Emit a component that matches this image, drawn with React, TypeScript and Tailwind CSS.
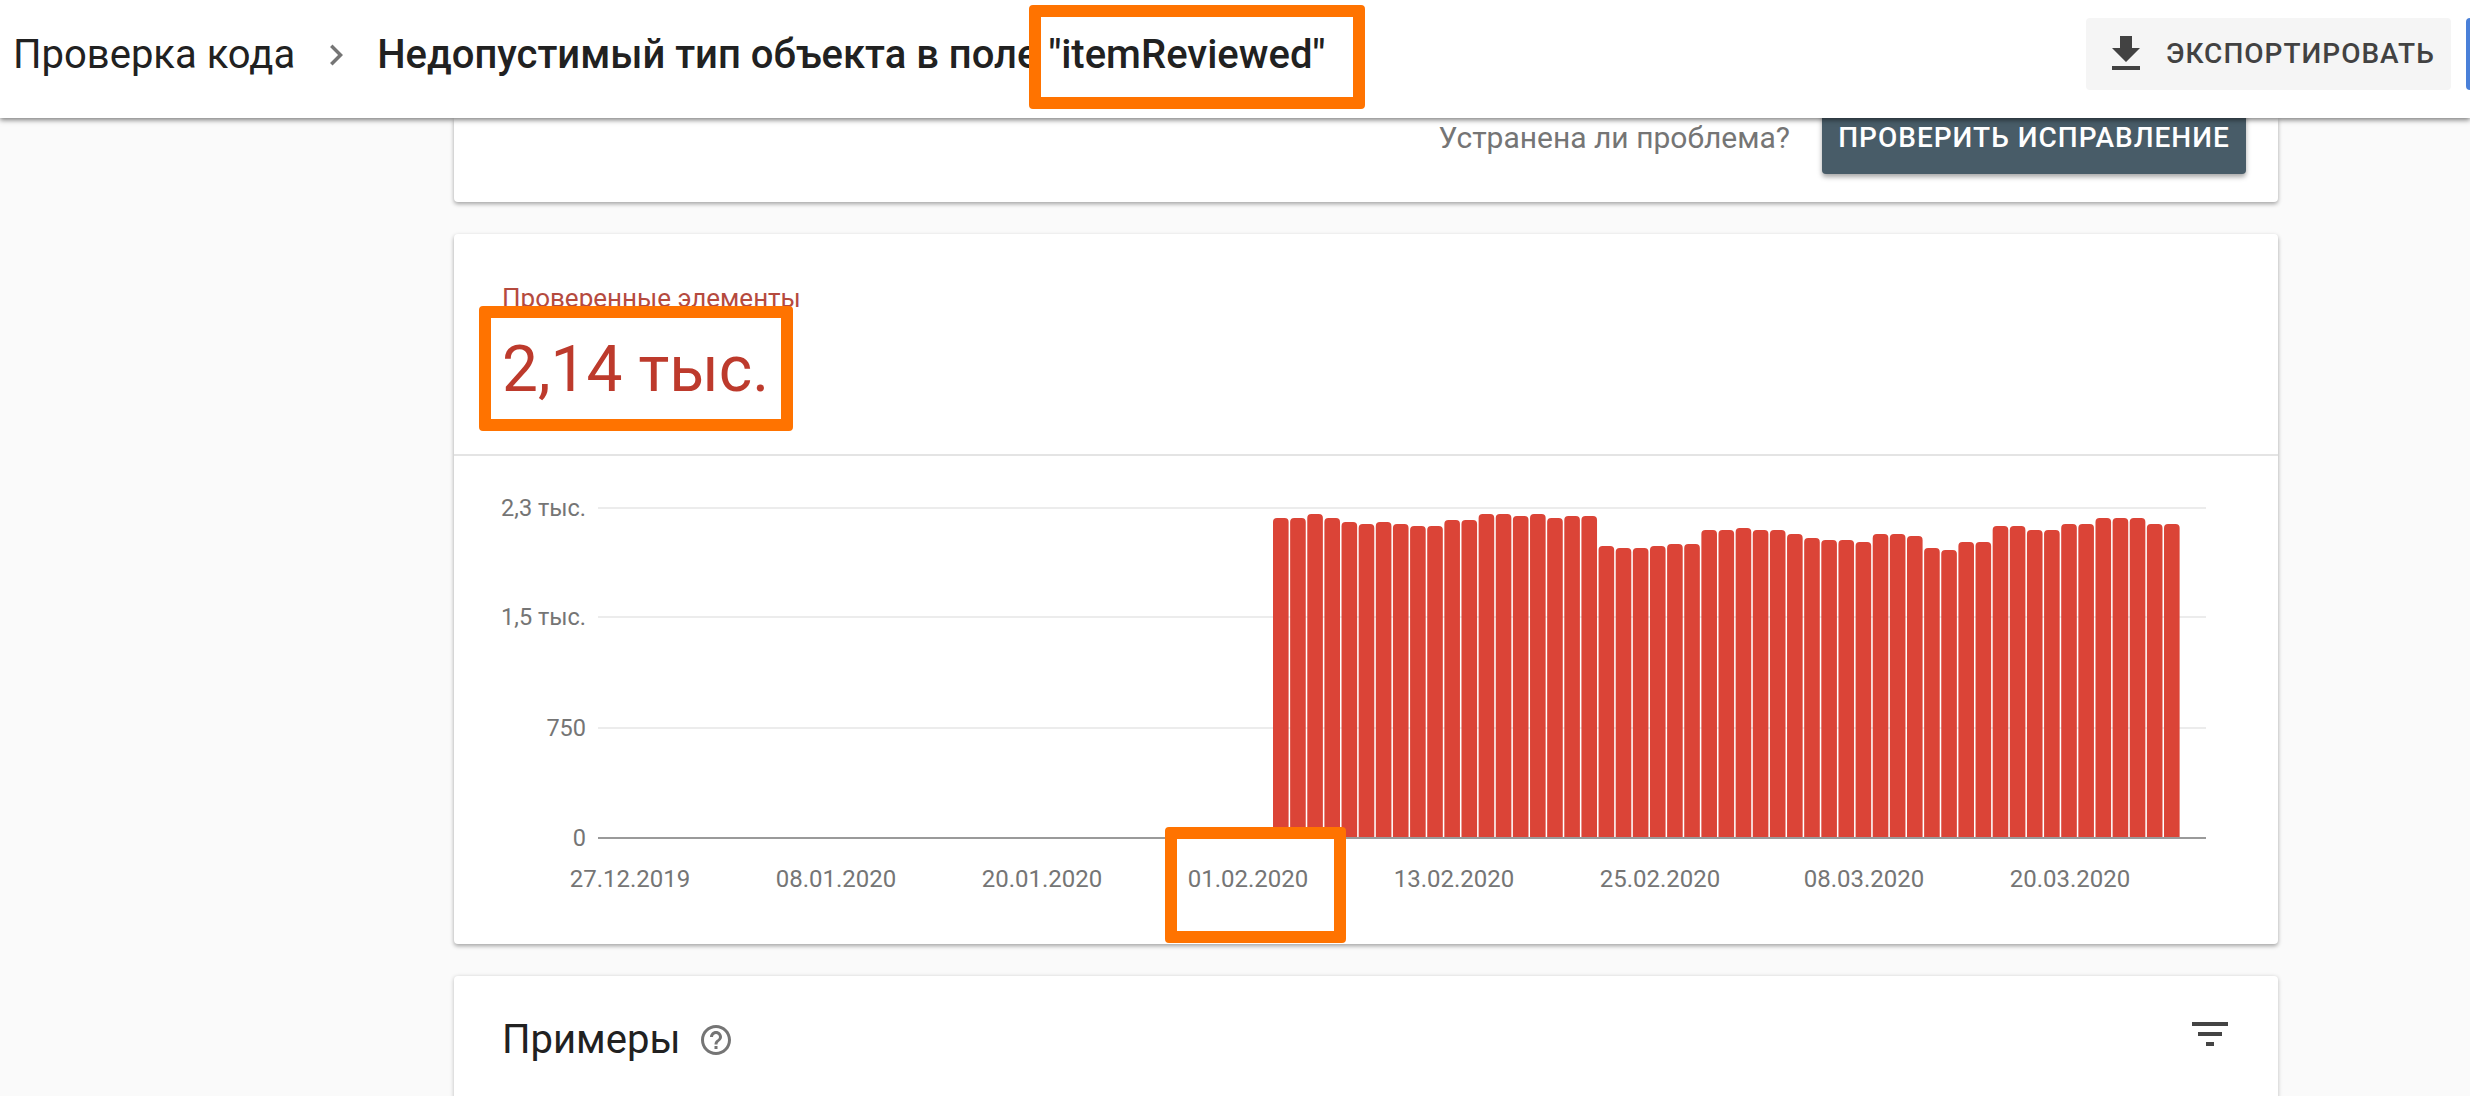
const barTops = [
  114, 114, 102, 114, 126, 132, 126, 132, 138, 138, 120, 120, 102, 102, 108, 102, 114, 108, 108,
  198, 204, 204, 198, 192, 192, 150, 150, 144, 150, 150, 162, 174, 180, 180, 186, 162, 162, 168,
  204, 210, 186, 186, 138, 138, 150, 150, 132, 132, 114, 114, 114, 132, 132,
];

const yTicks = [
  { label: "2,3 тыс.", y: 508 },
  { label: "1,5 тыс.", y: 617 },
  { label: "750", y: 728 },
];

const xTicks = [
  { label: "27.12.2019", x: 630 },
  { label: "08.01.2020", x: 836 },
  { label: "20.01.2020", x: 1042 },
  { label: "01.02.2020", x: 1248 },
  { label: "13.02.2020", x: 1454 },
  { label: "25.02.2020", x: 1660 },
  { label: "08.03.2020", x: 1864 },
  { label: "20.03.2020", x: 2070 },
];

// svg origin sits at the left edge of the card, divider line (454, 456)
const originX = 454;
const originY = 456;

function Chart() {
  return (
    <svg width="1824" height="488" className="block font-['Roboto',sans-serif]">
      {yTicks.map((t) => (
        <g key={t.label}>
          <line x1={598 - originX} x2={2206 - originX} y1={t.y - originY} y2={t.y - originY} stroke="#ececec" strokeWidth="2" />
          <text x={586 - originX} y={t.y - originY + 8} textAnchor="end" fontSize="23.5" fill="#757575">
            {t.label}
          </text>
        </g>
      ))}
      <text x={586 - originX} y={838 - originY + 8} textAnchor="end" fontSize="23.5" fill="#757575">
        0
      </text>
      {barTops.map((top, i) => {
        const y = 480 + top / 3 - originY;
        const x = 1273 - originX + i * 17.135;
        const bottom = 838 - originY;
        const w = 15.6;
        return (
          <path
            key={i}
            d={`M${x} ${bottom}V${y + 4}Q${x} ${y} ${x + 4} ${y}H${x + w - 4}Q${x + w} ${y} ${x + w} ${y + 4}V${bottom}Z`}
            fill="#db4437"
          />
        );
      })}
      <line x1={598 - originX} x2={2206 - originX} y1={838 - originY} y2={838 - originY} stroke="#9a9a9a" strokeWidth="2" />
      {xTicks.map((t) => (
        <text key={t.label} x={t.x - originX} y={887 - originY} textAnchor="middle" fontSize="24" fill="#757575">
          {t.label}
        </text>
      ))}
    </svg>
  );
}

export default function App() {
  return (
    <div className="relative h-[1096px] w-[2470px] overflow-hidden bg-[#fafafa] font-['Roboto',sans-serif]">
      {/* Top bar */}
      <header className="relative z-10 flex h-[118px] items-center justify-between bg-white pl-[13px] shadow-[0_2px_5px_rgba(0,0,0,0.5)]">
        <div className="flex items-center whitespace-nowrap pb-[8px] text-[40px] text-[#212121]">
          <span>Проверка кода</span>
          <svg viewBox="0 0 24 24" className="mx-[20px] h-[42px] w-[42px] fill-[#757575]">
            <path d="M10 6L8.59 7.41 13.17 12l-4.58 4.59L10 18l6-6z" />
          </svg>
          <span className="font-medium">Недопустимый тип объекта в поле</span>
          <span className="ml-[10px] font-medium">"itemReviewed"</span>
        </div>
        <div className="flex items-center gap-[15px] pb-[10px]">
          <button className="flex h-[72px] w-[365px] items-center rounded-[4px] bg-[#f5f5f5] pl-[16px] text-[28px] font-medium tracking-[1px] whitespace-nowrap text-[#424242]">
            <svg viewBox="0 0 24 24" className="mr-[16px] h-[48px] w-[48px] fill-[#424242]">
              <path d="M19 9h-4V3H9v6H5l7 7 7-7zM5 18v2h14v-2H5z" />
            </svg>
            ЭКСПОРТИРОВАТЬ
          </button>
          <div className="h-[72px] w-[4px] rounded-l-[4px] bg-[#4a80d8]" />
        </div>
      </header>

      <main className="ml-[454px] flex w-[1824px] flex-col">
        {/* Validate fix card */}
        <section className="flex h-[84px] justify-end gap-[32px] rounded-b-[4px] bg-white pr-[32px] shadow-[0_2px_4px_rgba(0,0,0,0.35)]">
          <span className="pt-[1px] text-[30px] leading-[38px] text-[#757575]">Устранена ли проблема?</span>
          <button className="mt-[-16px] h-[72px] w-[424px] rounded-[4px] bg-[#485c68] text-[28px] font-medium tracking-[1px] whitespace-nowrap text-white shadow-[0_3px_5px_rgba(0,0,0,0.35)]">
            ПРОВЕРИТЬ ИСПРАВЛЕНИЕ
          </button>
        </section>

        {/* Chart card */}
        <section className="mt-[32px] h-[710px] rounded-[4px] bg-white shadow-[0_2px_4px_rgba(0,0,0,0.35)]">
          <div className="h-[222px] border-b-[2px] border-[#e4e4e4] pl-[48px] pt-[50px]">
            <div className="text-[26px] leading-[28px] text-[#b54a3e]">Проверенные элементы</div>
            <div className="mt-[20px] text-[64px] leading-[76px] text-[#bd3a2c]">2,14 тыс.</div>
          </div>
          <Chart />
        </section>

        {/* Examples card */}
        <section className="mt-[32px] flex h-[200px] items-start justify-between rounded-t-[4px] bg-white pl-[48px] pr-[44px] pt-[40px] shadow-[0_1px_4px_rgba(0,0,0,0.25)]">
          <div className="flex items-center gap-[18px]">
            <span className="text-[40px] leading-[48px] text-[#212121]">Примеры</span>
            <svg viewBox="0 0 24 24" className="h-[36px] w-[36px] fill-[#757575]">
              <path d="M11 18h2v-2h-2v2zm1-16C6.48 2 2 6.48 2 12s4.48 10 10 10 10-4.48 10-10S17.52 2 12 2zm0 18c-4.41 0-8-3.59-8-8s3.59-8 8-8 8 3.59 8 8-3.59 8-8 8zm0-14c-2.21 0-4 1.79-4 4h2c0-1.1.9-2 2-2s2 .9 2 2c0 2-3 1.75-3 5h2c0-2.25 3-2.5 3-5 0-2.21-1.79-4-4-4z" />
            </svg>
          </div>
          <svg viewBox="0 0 24 24" className="mt-[-6px] h-[48px] w-[48px] fill-[#444444]">
            <path d="M10 18h4v-2h-4v2zM3 6v2h18V6H3zm3 7h12v-2H6v2z" />
          </svg>
        </section>
      </main>

      {/* Orange annotation frames */}
      <div className="absolute left-[1029px] top-[5px] z-20 h-[104px] w-[336px] rounded-[4px] border-[12px] border-[#ff7300]" />
      <div className="absolute left-[479px] top-[306px] z-20 h-[125px] w-[314px] rounded-[4px] border-[12px] border-[#ff7300]" />
      <div className="absolute left-[1165px] top-[827px] z-20 h-[116px] w-[181px] rounded-[4px] border-[12px] border-[#ff7300]" />
    </div>
  );
}
